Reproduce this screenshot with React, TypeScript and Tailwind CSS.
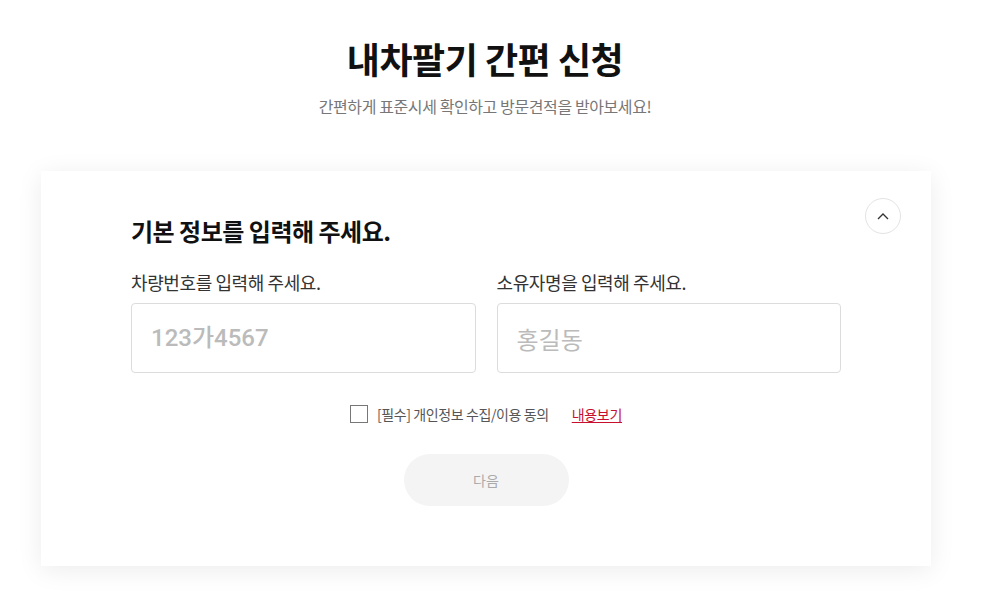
export default function App() {
  return (
    <div
      className="min-h-[597px] w-[970px] bg-white pt-[34px]"
      style={{ fontFamily: '"Noto Sans CJK KR", "Noto Sans", sans-serif' }}
    >
      <h1 className="text-center text-[36px] font-bold leading-[48px] tracking-[-0.5px] text-[#111]">
        내차팔기 간편 신청
      </h1>
      <p className="mt-[12px] text-center text-[16px] leading-[24px] tracking-[-0.4px] text-[#777]">
        간편하게 표준시세 확인하고 방문견적을 받아보세요!
      </p>

      <div className="relative ml-[41px] mt-[53px] h-[395px] w-[890px] bg-white px-[90px] pt-[42px] shadow-[0_4px_24px_rgba(0,0,0,0.08)]">
        <button className="absolute right-[30px] top-[27px] flex h-[36px] w-[36px] items-center justify-center rounded-full border border-[#e3e3e3] bg-white">
          <svg width="12" height="8" viewBox="0 0 12 8" fill="none">
            <path d="M1 7L6 2L11 7" stroke="#333" strokeWidth="1.3" />
          </svg>
        </button>

        <h2 className="text-[24px] font-bold leading-[36px] tracking-[-0.5px] text-[#111]">
          기본 정보를 입력해 주세요.
        </h2>

        <div className="mt-[20px] grid grid-cols-2 gap-[21px]">
          <div>
            <label className="block text-[18px] leading-[26px] tracking-[-0.4px] text-[#333]">
              차량번호를 입력해 주세요.
            </label>
            <input
              placeholder="123가4567"
              className="mt-[8px] h-[70px] w-full rounded-[4px] border border-[#dcdcdc] px-[19px] text-[24px] font-medium outline-none placeholder:text-[#bbb]"
              style={{ fontFamily: 'Roboto, "Noto Sans CJK KR", sans-serif' }}
            />
          </div>
          <div>
            <label className="block text-[18px] leading-[26px] tracking-[-0.4px] text-[#333]">
              소유자명을 입력해 주세요.
            </label>
            <input
              placeholder="홍길동"
              className="mt-[8px] h-[70px] w-full rounded-[4px] border border-[#dcdcdc] px-[19px] text-[24px] outline-none placeholder:text-[#bbb]"
            />
          </div>
        </div>

        <div className="mt-[31px] flex items-center justify-center">
          <span className="h-[18px] w-[18px] border border-[#777] bg-white" />
          <span className="ml-[9px] text-[14px] leading-[20px] tracking-[-0.4px] text-[#555]">
            [필수] 개인정보 수집/이용 동의
          </span>
          <a className="ml-[23px] text-[14px] leading-[20px] tracking-[-0.3px] text-[#c8102e] underline underline-offset-2">
            내용보기
          </a>
        </div>

        <div className="mt-[30px] flex justify-center">
          <button className="h-[52px] w-[165px] rounded-full bg-[#f4f4f4] text-[14px] text-[#aaa]">
            다음
          </button>
        </div>
      </div>
    </div>
  )
}
